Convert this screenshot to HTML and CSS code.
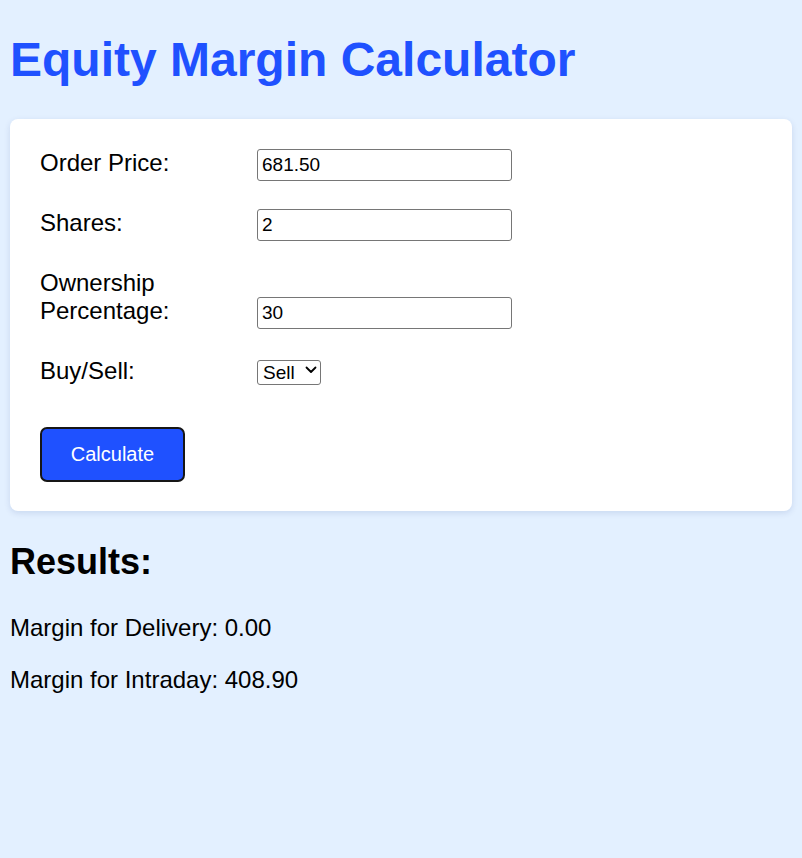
FILE: index.html
```html
<!DOCTYPE html>
<html lang="en">
<head>
<meta charset="utf-8">
<title>Equity Margin Calculator</title>
<link rel="stylesheet" href="styles.css">
</head>
<body>
<h1 class="title">Equity Margin Calculator</h1>
<form class="card">
  <div class="row">
    <label class="label" for="price">Order Price:</label><input class="field" id="price" type="text" value="681.50">
  </div>
  <div class="row">
    <label class="label" for="shares">Shares:</label><input class="field" id="shares" type="text" value="2">
  </div>
  <div class="row">
    <label class="label" for="own">Ownership Percentage:</label><input class="field" id="own" type="text" value="30">
  </div>
  <div class="row">
    <label class="label" for="side">Buy/Sell:</label><span class="select-wrap"><select class="picker" id="side"><option>Buy</option><option selected>Sell</option></select><svg class="chevron" width="12" height="8" viewBox="0 0 12 8" aria-hidden="true"><path d="M1.5 1.5 L6 6 L10.5 1.5" fill="none" stroke="#000" stroke-width="1.8" stroke-linecap="round" stroke-linejoin="round"/></svg></span>
  </div>
  <div class="actions">
    <button class="btn" type="button">Calculate</button>
  </div>
</form>
<h2 class="results-title">Results:</h2>
<p class="result">Margin for Delivery: 0.00</p>
<p class="result">Margin for Intraday: 408.90</p>
</body>
</html>
```
FILE: styles.css
```css
html, body {
  background: #e3f0ff;
}
body {
  margin: 0;
  padding: 10px;
  font-family: "Liberation Sans", Arial, sans-serif;
  font-size: 24px;
  color: #000;
}
.title {
  margin: 22px 0 32px;
  font-size: 48px;
  font-weight: bold;
  line-height: 55px;
  color: #1f51ff;
}
.card {
  background: #fff;
  border-radius: 8px;
  box-shadow: 0 2px 6px rgba(0, 40, 120, 0.12);
  padding: 30px 30px 29px;
}
.row {
  margin-bottom: 28px;
  line-height: 28px;
}
.label {
  display: inline-block;
  width: 217px;
  vertical-align: baseline;
}
.field {
  box-sizing: border-box;
  width: 255px;
  height: 32px;
  padding: 1px 4px;
  border: 1px solid #767676;
  border-radius: 3px;
  font-family: "Liberation Sans", Arial, sans-serif;
  font-size: 19px;
  color: #000;
  background: #fff;
}
.select-wrap {
  position: relative;
  display: inline-block;
}
.picker {
  -webkit-appearance: none;
  appearance: none;
  box-sizing: border-box;
  height: 25px;
  width: 64px;
  padding: 0 0 0 5px;
  font-family: "Liberation Sans", Arial, sans-serif;
  font-size: 19px;
  border: 1px solid #767676;
  border-radius: 3px;
  background: #fff;
  color: #000;
}
.chevron {
  position: absolute;
  right: 4px;
  top: 50%;
  margin-top: -5px;
  pointer-events: none;
}
.actions {
  padding-top: 14px;
}
.btn {
  box-sizing: border-box;
  height: 55px;
  width: 145px;
  padding: 0;
  border: 2.5px solid #161616;
  border-radius: 7px;
  background: #1f51ff;
  color: #fff;
  font-family: "Liberation Sans", Arial, sans-serif;
  font-size: 20px;
  line-height: 23px;
}
.results-title {
  margin: 30px 0 0;
  font-size: 36px;
  font-weight: bold;
  line-height: 42px;
}
.result {
  margin: 31px 0 0;
  line-height: 28px;
}
.result + .result {
  margin-top: 24px;
}
```
